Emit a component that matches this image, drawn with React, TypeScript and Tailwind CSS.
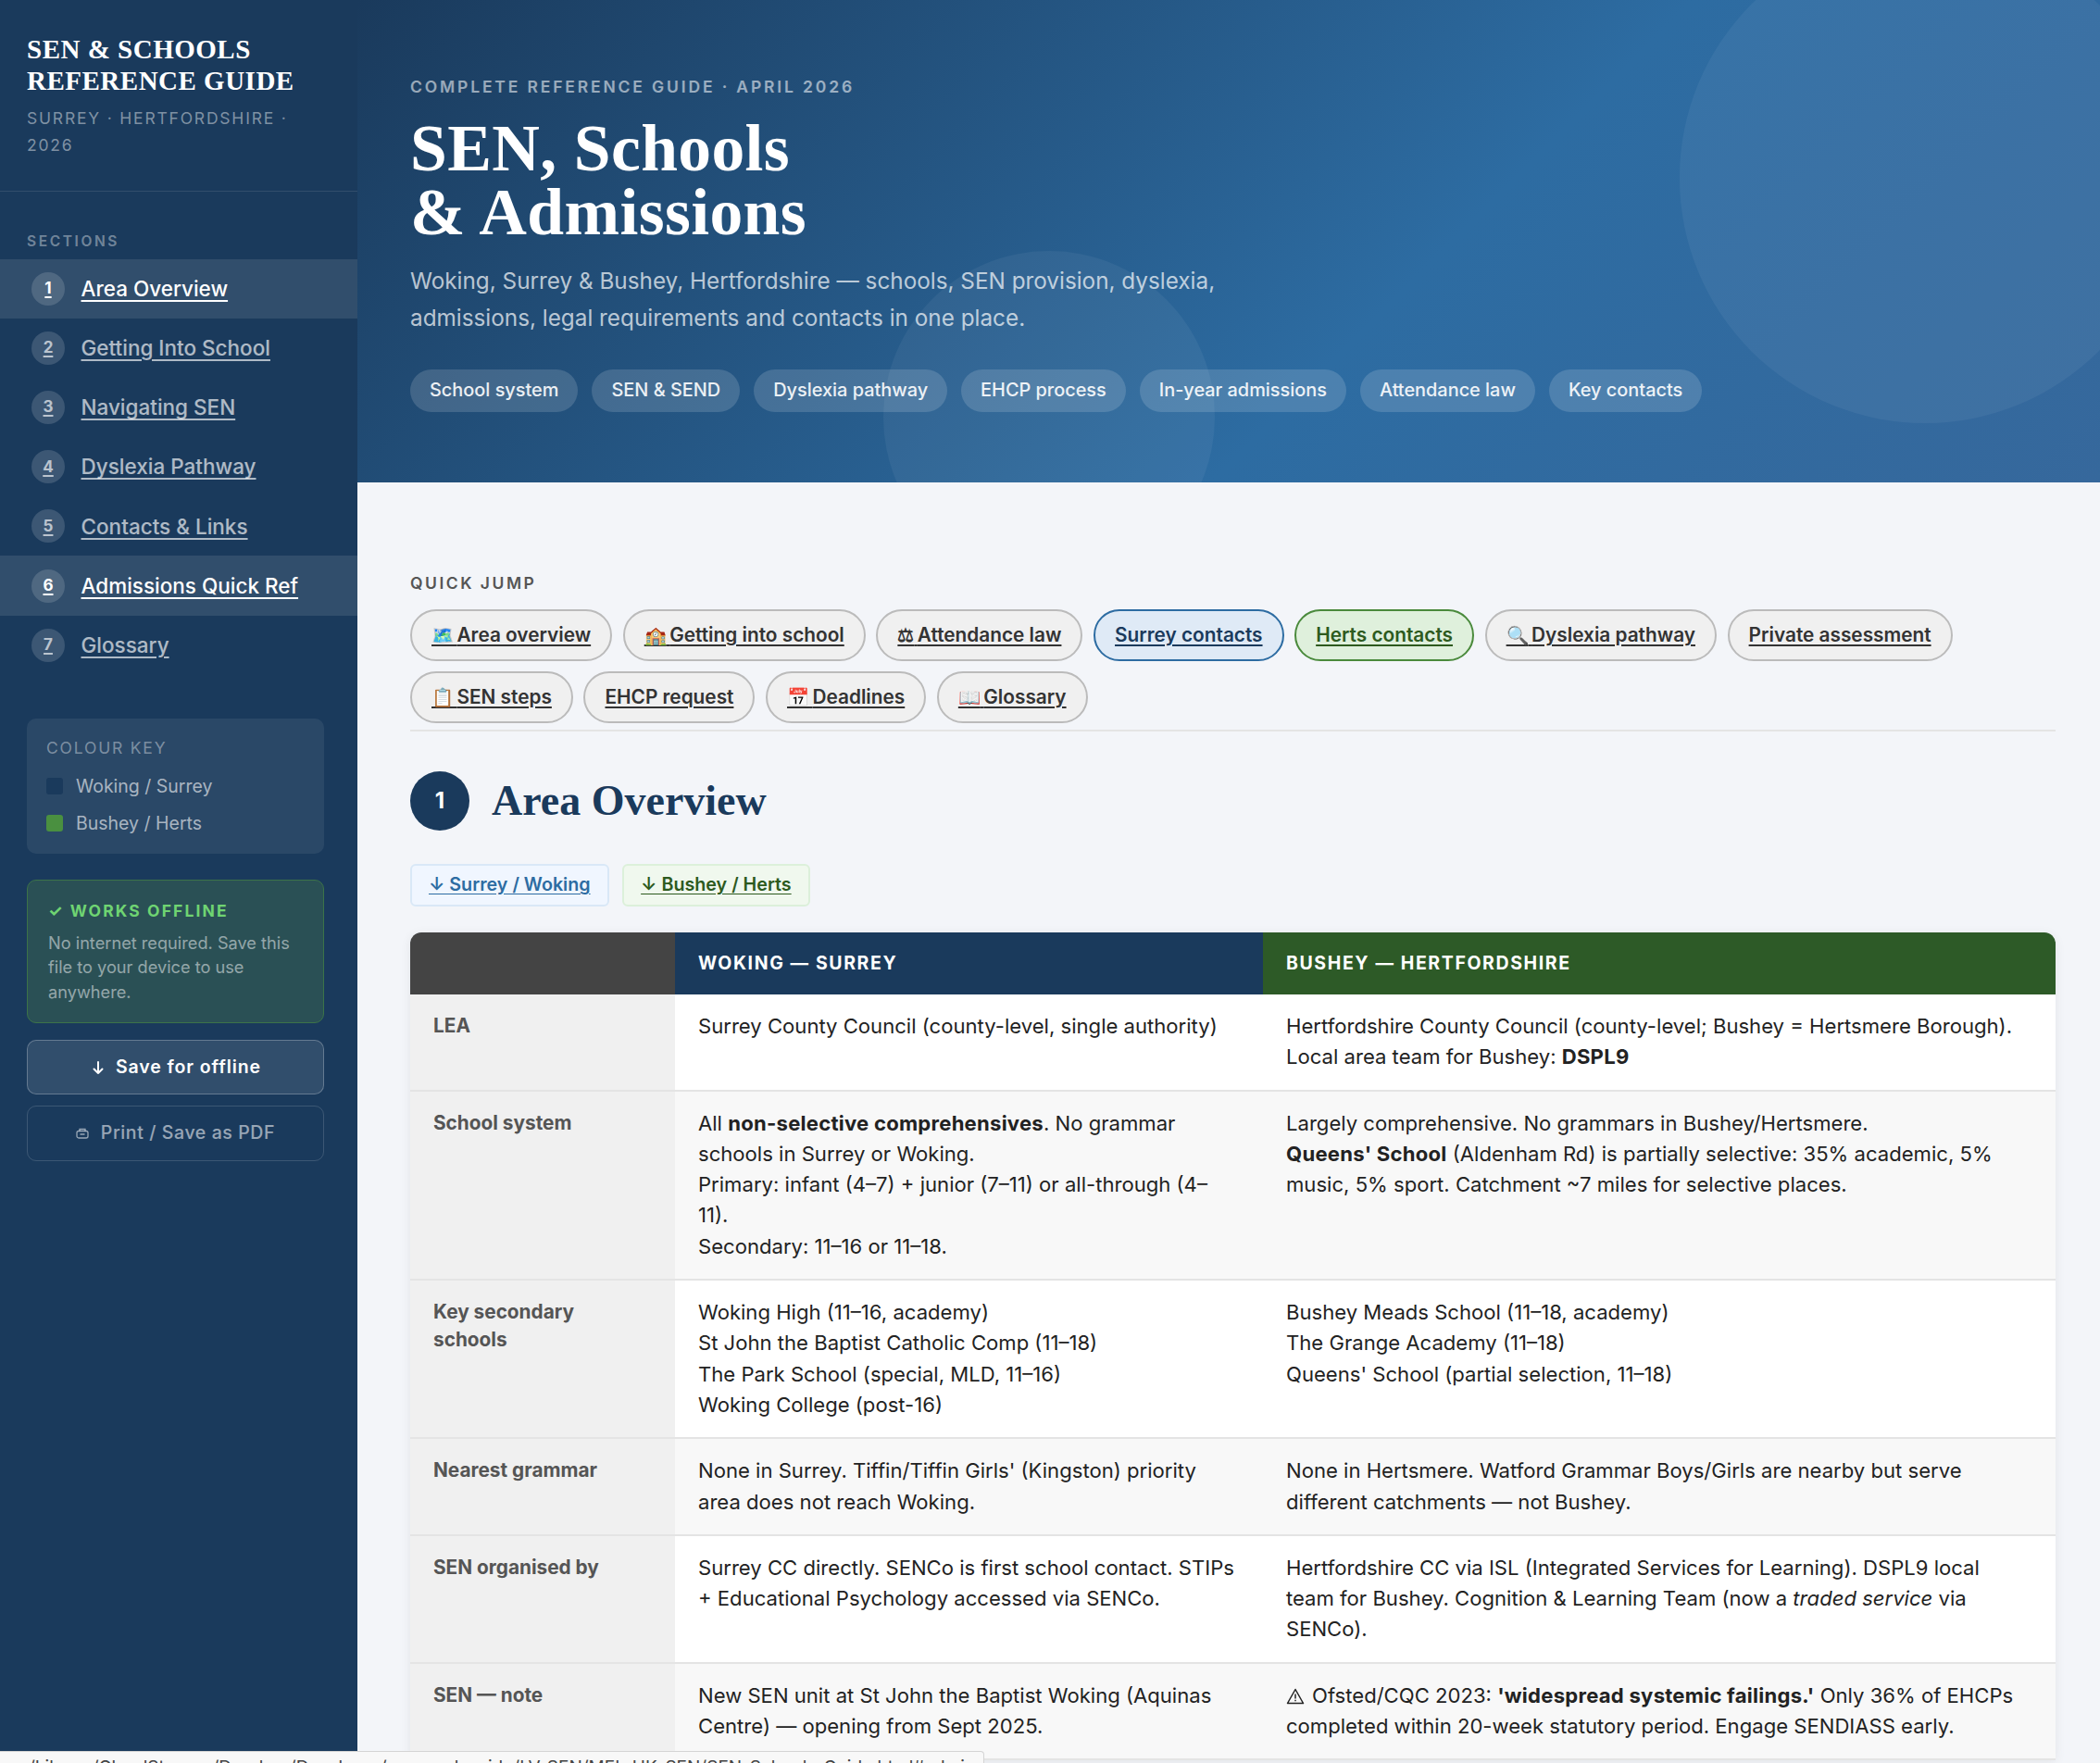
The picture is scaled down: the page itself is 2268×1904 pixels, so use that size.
import { ReactNode } from 'react';

const navItems = [
  { n: 1, label: 'Area Overview', active: true },
  { n: 2, label: 'Getting Into School' },
  { n: 3, label: 'Navigating SEN' },
  { n: 4, label: 'Dyslexia Pathway' },
  { n: 5, label: 'Contacts & Links' },
  { n: 6, label: 'Admissions Quick Ref', active: true },
  { n: 7, label: 'Glossary' },
];

const heroPills = ['School system', 'SEN & SEND', 'Dyslexia pathway', 'EHCP process', 'In-year admissions', 'Attendance law', 'Key contacts'];

const jumpsOne = [
  { icon: '🗺️', label: 'Area overview' },
  { icon: '🏫', label: 'Getting into school' },
  { icon: '⚖', label: 'Attendance law' },
  { label: 'Surrey contacts', tone: 'blue' },
  { label: 'Herts contacts', tone: 'green' },
  { icon: '🔍', label: 'Dyslexia pathway' },
  { label: 'Private assessment' },
];
const jumpsTwo = [{ icon: '📋', label: 'SEN steps' }, { label: 'EHCP request' }, { icon: '📅', label: 'Deadlines' }, { icon: '📖', label: 'Glossary' }];

function B({ children }: { children: ReactNode }) {
  return <strong className="tracking-[0.24px]">{children}</strong>;
}

const rows: { label: ReactNode; surrey: ReactNode; herts: ReactNode }[] = [
  {
    label: 'LEA',
    surrey: 'Surrey County Council (county-level, single authority)',
    herts: (
      <>
        Hertfordshire County Council (county-level; Bushey = Hertsmere Borough).
        <br />
        Local area team for Bushey: <B>DSPL9</B>
      </>
    ),
  },
  {
    label: 'School system',
    surrey: (
      <>
        All <B>non-selective comprehensives</B>. No grammar schools in Surrey or Woking.
        <br />
        Primary: infant (4–7) + junior (7–11) or all-through (4–
        <br />
        11).
        <br />
        Secondary: 11–16 or 11–18.
      </>
    ),
    herts: (
      <>
        Largely comprehensive. No grammars in Bushey/Hertsmere.
        <br />
        <B>Queens' School</B> (Aldenham Rd) is partially selective: 35% academic, 5% music, 5% sport. Catchment ~7 miles for selective places.
      </>
    ),
  },
  {
    label: 'Key secondary schools',
    surrey: (
      <>
        Woking High (11–16, academy)
        <br />
        St John the Baptist Catholic Comp (11–18)
        <br />
        The Park School (special, MLD, 11–16)
        <br />
        Woking College (post-16)
      </>
    ),
    herts: (
      <>
        Bushey Meads School (11–18, academy)
        <br />
        The Grange Academy (11–18)
        <br />
        Queens' School (partial selection, 11–18)
      </>
    ),
  },
  {
    label: 'Nearest grammar',
    surrey: "None in Surrey. Tiffin/Tiffin Girls' (Kingston) priority area does not reach Woking.",
    herts: 'None in Hertsmere. Watford Grammar Boys/Girls are nearby but serve different catchments — not Bushey.',
  },
  {
    label: 'SEN organised by',
    surrey: 'Surrey CC directly. SENCo is first school contact. STIPs + Educational Psychology accessed via SENCo.',
    herts: (
      <>
        Hertfordshire CC via ISL (Integrated Services for Learning). DSPL9 local team for Bushey. Cognition &amp; Learning Team (now a <em>traded service</em> via SENCo).
      </>
    ),
  },
  {
    label: 'SEN — note',
    surrey: 'New SEN unit at St John the Baptist Woking (Aquinas Centre) — opening from Sept 2025.',
    herts: (
      <>
        <svg className="inline-block align-[-2px] mr-[8px]" width="20" height="18" viewBox="0 0 20 18" fill="none" stroke="currentColor" strokeWidth="1.500" strokeLinejoin="round">
          <path d="M10 1.500 18.500 16.500H1.500z" />
          <path d="M10 6.500v5M10 12.800v1.500" />
        </svg>
        Ofsted/CQC 2023: <B>'widespread systemic failings.'</B> Only 36% of EHCPs completed within 20-week statutory period. Engage SENDIASS early.
      </>
    ),
  },
];

function Sidebar() {
  return (
    <aside className="w-[386px] shrink-0 bg-[#1a3a5c] flex flex-col">
      <div className="pt-[36px] pb-[35px] pl-[29px] pr-[29px] border-b border-white/10">
        <div className="font-['Liberation_Serif',serif] font-bold text-white text-[29px] leading-[34px] tracking-[0.5px]">
          SEN &amp; SCHOOLS
          <br />
          REFERENCE GUIDE
        </div>
        <div className="mt-[9px] text-[17.5px] leading-[29px] tracking-[1.8px] text-white/45">SURREY · HERTFORDSHIRE · 2026</div>
      </div>
      <div className="pt-[44px] pl-[29px] text-[15.5px] leading-[20px] font-semibold tracking-[2.6px] text-white/40">SECTIONS</div>
      <nav className="mt-[9px] flex flex-col">
        {navItems.map((item) => (
          <a
            key={item.n}
            href="#"
            className={`h-[64.100px] flex items-center pl-[34px] gap-[17.500px] underline underline-offset-[4px] text-[22.5px] font-medium ${
              item.active ? 'bg-white/10 text-white' : 'text-white/65'
            }`}
          >
            <span className="w-[36px] h-[36px] rounded-full bg-white/15 flex items-center justify-center text-[17px] font-bold underline underline-offset-[3px]">{item.n}</span>
            {item.label}
          </a>
        ))}
      </nav>
      <div className="mt-[47px] ml-[29px] mr-[36px] rounded-[10px] bg-white/[0.07] pt-[21px] pb-[20px] pl-[21px] pr-[21px]">
        <div className="text-[17.5px] leading-[22px] tracking-[1.8px] text-white/40">COLOUR KEY</div>
        <div className="mt-[17px] flex items-center gap-[14px] text-[19.5px] leading-[26px] text-white/60">
          <span className="w-[18px] h-[18px] rounded-[3px] bg-[#1a3a5c]" />
          Woking / Surrey
        </div>
        <div className="mt-[14px] flex items-center gap-[14px] text-[19.5px] leading-[26px] text-white/60">
          <span className="w-[18px] h-[18px] rounded-[3px] bg-[#4a9040]" />
          Bushey / Herts
        </div>
      </div>
      <div className="mt-[28px] ml-[29px] mr-[36px] rounded-[10px] border border-[#3c7349] bg-[#2a5055] px-[22px] pt-[21px] pb-[19px]">
        <div className="text-[17.5px] leading-[24px] font-bold tracking-[2.1px] text-[#6fd472]">✓ WORKS OFFLINE</div>
        <div className="mt-[9px] text-[18.200px] leading-[26.800px] text-white/50">No internet required. Save this file to your device to use anywhere.</div>
      </div>
      <button className="mt-[18px] ml-[29px] mr-[36px] h-[59px] rounded-[10px] border border-white/25 bg-white/10 text-white text-[19.5px] font-semibold tracking-[0.9px] flex items-center justify-center gap-[10px]">
        <svg width="18" height="18" viewBox="0 0 18 18" fill="none" stroke="currentColor" strokeWidth="2" strokeLinecap="round" strokeLinejoin="round">
          <path d="M9 3v12M4.500 10.500 9 15l4.500-4.500" />
        </svg>
        Save for offline
      </button>
      <button className="mt-[12px] ml-[29px] mr-[36px] h-[60px] rounded-[10px] border border-white/15 text-white/55 text-[19.5px] font-medium tracking-[0.6px] flex items-center justify-center gap-[13px]">
        <svg width="14" height="12" viewBox="0 0 14 12" fill="none" stroke="currentColor" strokeWidth="1.300">
          <rect x="1" y="3.500" width="12" height="7.500" rx="2" />
          <path d="M4 3.500V1.500h6v2M4.500 7h5" />
        </svg>
        Print / Save as PDF
      </button>
    </aside>
  );
}

function Hero() {
  return (
    <header className="relative overflow-hidden h-[521px] shrink-0 bg-[linear-gradient(135deg,#1a3a5c_0%,#2d6ca2_60%,#36689c_100%)] pt-[83px] pl-[57px]">
      <div className="absolute rounded-full bg-white/5 w-[530px] h-[530px] left-[1428px] top-[-73px]" />
      <div className="absolute rounded-full bg-white/5 w-[358px] h-[358px] left-[568px] top-[271px]" />
      <div className="relative">
        <div className="text-[17.5px] leading-[22px] font-semibold tracking-[2.85px] text-white/55">COMPLETE REFERENCE GUIDE · APRIL 2026</div>
        <h1 className="mt-[20px] font-['Liberation_Serif',serif] font-bold text-white text-[71.5px] leading-[69px] tracking-[0.4px]">
          SEN, Schools
          <br />
          &amp; Admissions
        </h1>
        <p className="mt-[20px] w-[900px] text-[24.300px] leading-[40px] text-white/70">
          Woking, Surrey &amp; Bushey, Hertfordshire — schools, SEN provision, dyslexia, admissions, legal requirements and contacts in one place.
        </p>
        <div className="mt-[35.500px] flex gap-[15px]">
          {heroPills.map((pill) => (
            <span key={pill} className="h-[46px] px-[21px] rounded-full bg-white/15 text-white/90 text-[19.9px] font-medium flex items-center">
              {pill}
            </span>
          ))}
        </div>
      </div>
    </header>
  );
}

function JumpLink({ label, icon, tone }: { label: string; icon?: string; tone?: string }) {
  const toneClass =
    tone === 'blue'
      ? 'border-[#2d6ca2] bg-[#dfeaf6] text-[#1a3a5c]'
      : tone === 'green'
        ? 'border-[#4a8a3c] bg-[#dff0dc] text-[#2d5a1e]'
        : 'border-[#bbbbbb] bg-[#f0f0f0] text-[#333333]';
  return (
    <a href="#" className={`h-[56px] px-[21px] rounded-full border-2 ${toneClass} flex items-center underline underline-offset-[3px] text-[20.8px] font-semibold whitespace-pre`}>
      <span>
        {icon && <span className="text-[19.5px]">{icon}</span>}
        {icon && '\u2009'}
        {label}
      </span>
    </a>
  );
}

function Row({ label, surrey, herts, even }: { label: ReactNode; surrey: ReactNode; herts: ReactNode; even: boolean }) {
  const bg = even ? 'bg-[#f8f8f8]' : 'bg-white';
  return (
    <div className="grid grid-cols-[286px_635px_1fr] border-b-2 border-[#e4e4e4]">
      <div className="bg-[#f0f0f0] pl-[25px] pr-[50px] pt-[19px] pb-[17px] text-[20.8px] leading-[30px] font-bold text-[#555555]">{label}</div>
      <div className={`${bg} px-[25px] py-[18px] text-[#222222]`}>{surrey}</div>
      <div className={`${bg} px-[25px] py-[18px] text-[#222222]`}>{herts}</div>
    </div>
  );
}

function Main() {
  return (
    <div className="pr-[48px] pl-[57px] pt-[98px]">
      <div className="text-[17.5px] leading-[22px] font-semibold tracking-[2.5px] text-[#555555]">QUICK JUMP</div>
      <div className="mt-[17px] flex flex-col gap-[11px] pb-[7px] border-b-2 border-[#e4e4e4]">
        <div className="flex gap-[11.600px]">
          {jumpsOne.map((j) => (
            <JumpLink key={j.label} label={j.label} icon={j.icon} tone={j.tone} />
          ))}
        </div>
        <div className="flex gap-[11.600px]">
          {jumpsTwo.map((j) => (
            <JumpLink key={j.label} label={j.label} icon={j.icon} />
          ))}
        </div>
      </div>
      <div className="mt-[43px] flex items-center gap-[24px]">
        <span className="w-[64px] h-[64px] rounded-full bg-[#1a3a5c] text-white text-[24px] font-bold flex items-center justify-center">1</span>
        <h2 className="font-['Liberation_Serif',serif] font-bold text-[#1a3a5c] text-[46px] leading-[64px]">Area Overview</h2>
      </div>
      <div className="mt-[36px] flex gap-[14.500px]">
        <a href="#" className="h-[46px] px-[18px] rounded-[6px] border-2 border-[#d9e8f7] bg-[#f0f6ff] text-[#2d6ca2] text-[19.7px] font-semibold underline underline-offset-[3px] flex items-center">
          ↓ Surrey / Woking
        </a>
        <a href="#" className="h-[46px] px-[18px] rounded-[6px] border-2 border-[#dcf0da] bg-[#f0f8ee] text-[#2d5a1e] text-[19.7px] font-semibold underline underline-offset-[3px] flex items-center">
          ↓ Bushey / Herts
        </a>
      </div>
      <div className="mt-[28px] rounded-t-[12px] overflow-hidden shadow-[0_2px_12px_rgba(0,0,0,0.07)] text-[22.1px] leading-[33.3px]">
        <div className="grid grid-cols-[286px_635px_1fr] h-[67px] text-white text-[19.5px] font-bold tracking-[1.6px]">
          <div className="bg-[#444444]" />
          <div className="bg-[#1a3a5c] px-[25px] flex items-center">WOKING — SURREY</div>
          <div className="bg-[#2d5a27] px-[25px] flex items-center">BUSHEY — HERTFORDSHIRE</div>
        </div>
        {rows.map((r, i) => (
          <Row key={i} label={r.label} surrey={r.surrey} herts={r.herts} even={i % 2 === 1} />
        ))}
      </div>
    </div>
  );
}

export default function App() {
  return (
    <div className="relative h-[1904px] w-[2268px] overflow-hidden flex bg-[#f3f5f9] font-['Inter',sans-serif]">
      <Sidebar />
      <main className="flex-1 flex flex-col min-w-0">
        <Hero />
        <Main />
      </main>
      <div className="absolute left-0 bottom-0 w-[1063px] h-[13px] bg-[#f8f8f8] border-t border-r border-[#d4d4d4] rounded-tr-[4px] overflow-hidden pl-[31px] pt-[6px] text-[19px] leading-[22px] text-[#444444] whitespace-nowrap">
        /Library/CloudStorage/Dropbox/Developer/personal-guide/LV_SEN/MEL_UK_SEN/SEN_Schools_Guide.html#admissions
      </div>
    </div>
  );
}
